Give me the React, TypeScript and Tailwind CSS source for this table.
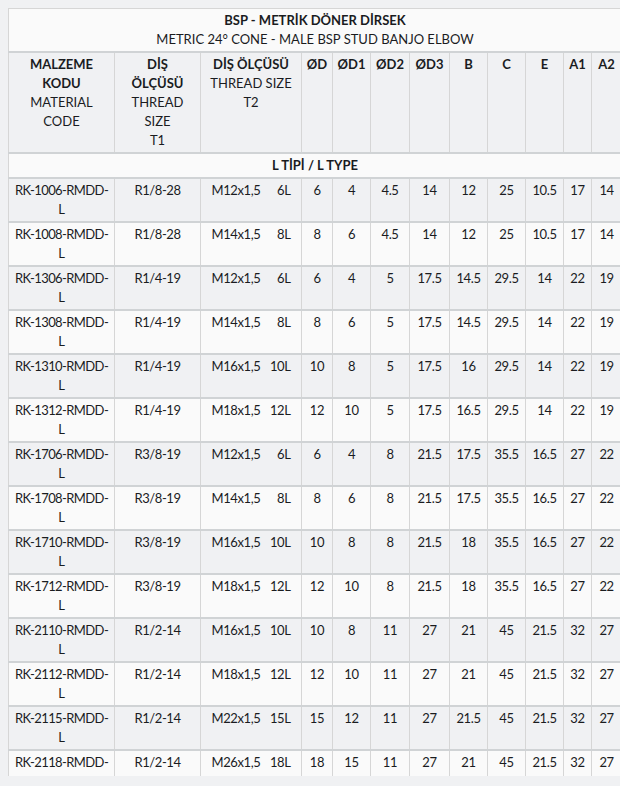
import React from 'react'

// kolon genişlikleri (px)
const colWidths = [106, 86, 101, 31, 38, 39, 40, 38, 38, 38, 28, 30]

type Row = {
  code: string
  t1: string
  t2: string
  l: string
  vals: string[]
}

const rows: Row[] = [
  { code: '1006', t1: 'R1/8-28', t2: 'M12x1,5', l: '6L', vals: ['6', '4', '4.5', '14', '12', '25', '10.5', '17', '14'] },
  { code: '1008', t1: 'R1/8-28', t2: 'M14x1,5', l: '8L', vals: ['8', '6', '4.5', '14', '12', '25', '10.5', '17', '14'] },
  { code: '1306', t1: 'R1/4-19', t2: 'M12x1,5', l: '6L', vals: ['6', '4', '5', '17.5', '14.5', '29.5', '14', '22', '19'] },
  { code: '1308', t1: 'R1/4-19', t2: 'M14x1,5', l: '8L', vals: ['8', '6', '5', '17.5', '14.5', '29.5', '14', '22', '19'] },
  { code: '1310', t1: 'R1/4-19', t2: 'M16x1,5', l: '10L', vals: ['10', '8', '5', '17.5', '16', '29.5', '14', '22', '19'] },
  { code: '1312', t1: 'R1/4-19', t2: 'M18x1,5', l: '12L', vals: ['12', '10', '5', '17.5', '16.5', '29.5', '14', '22', '19'] },
  { code: '1706', t1: 'R3/8-19', t2: 'M12x1,5', l: '6L', vals: ['6', '4', '8', '21.5', '17.5', '35.5', '16.5', '27', '22'] },
  { code: '1708', t1: 'R3/8-19', t2: 'M14x1,5', l: '8L', vals: ['8', '6', '8', '21.5', '17.5', '35.5', '16.5', '27', '22'] },
  { code: '1710', t1: 'R3/8-19', t2: 'M16x1,5', l: '10L', vals: ['10', '8', '8', '21.5', '18', '35.5', '16.5', '27', '22'] },
  { code: '1712', t1: 'R3/8-19', t2: 'M18x1,5', l: '12L', vals: ['12', '10', '8', '21.5', '18', '35.5', '16.5', '27', '22'] },
  { code: '2110', t1: 'R1/2-14', t2: 'M16x1,5', l: '10L', vals: ['10', '8', '11', '27', '21', '45', '21.5', '32', '27'] },
  { code: '2112', t1: 'R1/2-14', t2: 'M18x1,5', l: '12L', vals: ['12', '10', '11', '27', '21', '45', '21.5', '32', '27'] },
  { code: '2115', t1: 'R1/2-14', t2: 'M22x1,5', l: '15L', vals: ['15', '12', '11', '27', '21.5', '45', '21.5', '32', '27'] },
  { code: '2118', t1: 'R1/2-14', t2: 'M26x1,5', l: '18L', vals: ['18', '15', '11', '27', '21', '45', '21.5', '32', '27'] },
]

const dimHeads = ['ØD', 'ØD1', 'ØD2', 'ØD3', 'B', 'C', 'E', 'A1', 'A2']

const cell = 'border-x border-x-[#d6d6d6] border-b-2 border-b-[#d0d3d5] px-[2px] py-[2px] align-top text-center'

export default function App() {
  return (
    <div
      className="w-[620px] h-[786px] overflow-hidden bg-[#f0f1f3] pt-2 pl-2 text-[#1a1c1f] text-[13px] leading-[19px]"
      style={{ fontFamily: 'Lato, "Liberation Sans", sans-serif' }}
    >
      <div className="h-[768px] overflow-hidden">
        <table className="w-[613px] table-fixed border-collapse border-t border-l border-[#d6d6d6]">
          <colgroup>
            {colWidths.map((w, i) => (
              <col key={i} style={{ width: w }} />
            ))}
          </colgroup>
          <tbody>
            {/* başlık */}
            <tr className="bg-[#fafafa]">
              <td colSpan={12} className={cell}>
                <div className="font-bold">BSP - METRİK DÖNER DİRSEK</div>
                <div>METRIC 24° CONE - MALE BSP STUD BANJO ELBOW</div>
              </td>
            </tr>

            {/* kolon başlıkları */}
            <tr className="bg-[#f0f1f3]">
              <td className={cell}>
                <div className="font-bold">MALZEME</div>
                <div className="font-bold">KODU</div>
                <div>MATERIAL</div>
                <div>CODE</div>
              </td>
              <td className={cell}>
                <div className="font-bold">DİŞ</div>
                <div className="font-bold">ÖLÇÜSÜ</div>
                <div>THREAD</div>
                <div>SIZE</div>
                <div>T1</div>
              </td>
              <td className={cell}>
                <div className="font-bold whitespace-nowrap">DİŞ ÖLÇÜSÜ</div>
                <div className="whitespace-nowrap">THREAD SIZE</div>
                <div>T2</div>
              </td>
              {dimHeads.map((h) => (
                <td key={h} className={`${cell} font-bold whitespace-nowrap`}>
                  {h}
                </td>
              ))}
            </tr>

            {/* tip satırı */}
            <tr className="bg-[#fafafa]">
              <td colSpan={12} className={`${cell} font-bold`}>
                L TİPİ / L TYPE
              </td>
            </tr>

            {rows.map((r, i) => (
              <tr
                key={r.code}
                className={`tracking-[-0.4px] ${i % 2 === 0 ? 'bg-[#f0f1f3]' : 'bg-[#fafafa]'}`}
              >
                <td className={cell}>
                  <span className="whitespace-nowrap tracking-[-0.6px]">RK-{r.code}-RMDD-</span>
                  <br />L
                </td>
                <td className={cell}>{r.t1}</td>
                <td className={cell}>
                  <div className="mx-auto flex w-[79px] justify-between whitespace-nowrap">
                    <span>{r.t2}</span>
                    <span>{r.l}</span>
                  </div>
                </td>
                {r.vals.map((v, j) => (
                  <td key={j} className={`${cell} whitespace-nowrap`}>
                    {v}
                  </td>
                ))}
              </tr>
            ))}
          </tbody>
        </table>
      </div>
    </div>
  )
}
